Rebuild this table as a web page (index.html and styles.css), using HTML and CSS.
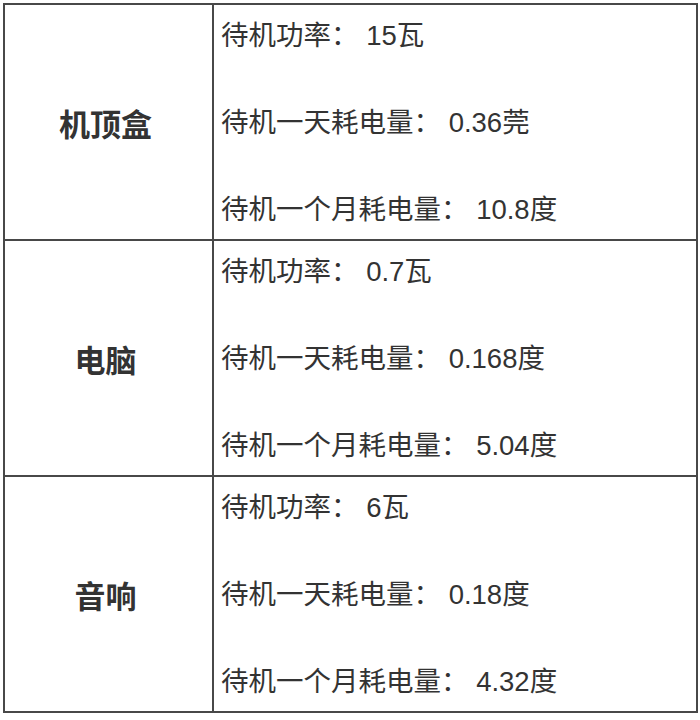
FILE: index.html
```html
<!DOCTYPE html>
<html lang="zh-CN">
<head>
<meta charset="utf-8">
<link rel="stylesheet" href="styles.css">
</head>
<body>
<div class="table">
  <div class="row">
    <div class="name">机顶盒</div>
    <div class="info">
      <div class="line">待机功率： 15瓦</div>
      <div class="line">待机一天耗电量： 0.36莞</div>
      <div class="line">待机一个月耗电量： 10.8度</div>
    </div>
  </div>
  <div class="row">
    <div class="name">电脑</div>
    <div class="info">
      <div class="line">待机功率： 0.7瓦</div>
      <div class="line">待机一天耗电量： 0.168度</div>
      <div class="line">待机一个月耗电量： 5.04度</div>
    </div>
  </div>
  <div class="row">
    <div class="name">音响</div>
    <div class="info">
      <div class="line">待机功率： 6瓦</div>
      <div class="line">待机一天耗电量： 0.18度</div>
      <div class="line">待机一个月耗电量： 4.32度</div>
    </div>
  </div>
</div>
</body>
</html>
```

FILE: styles.css
```css
html, body {
  margin: 0;
  padding: 0;
  background: #ffffff;
}
body {
  padding: 3px 0 0 3px;
  font-family: "Noto Sans CJK SC", "Noto Sans", sans-serif;
  color: #333333;
}
.table {
  width: 695px;
  box-sizing: border-box;
  border: 2px solid #484848;
  display: flex;
  flex-direction: column;
}
.row {
  display: flex;
  border-bottom: 2px solid #484848;
}
.row:last-child {
  border-bottom: none;
}
.name {
  width: 209px;
  border-right: 2px solid #484848;
  display: flex;
  align-items: center;
  justify-content: center;
  font-size: 31px;
  font-weight: 700;
  padding-right: 6px;
  box-sizing: border-box;
}
.info {
  flex: 1;
  display: flex;
  flex-direction: column;
  gap: 57px;
  padding: 16px 8px 14px 7px;
}
.line {
  font-family: "Liberation Sans", "Noto Sans CJK SC", sans-serif;
  font-size: 27.5px;
  line-height: 30px;
  white-space: nowrap;
}
```
